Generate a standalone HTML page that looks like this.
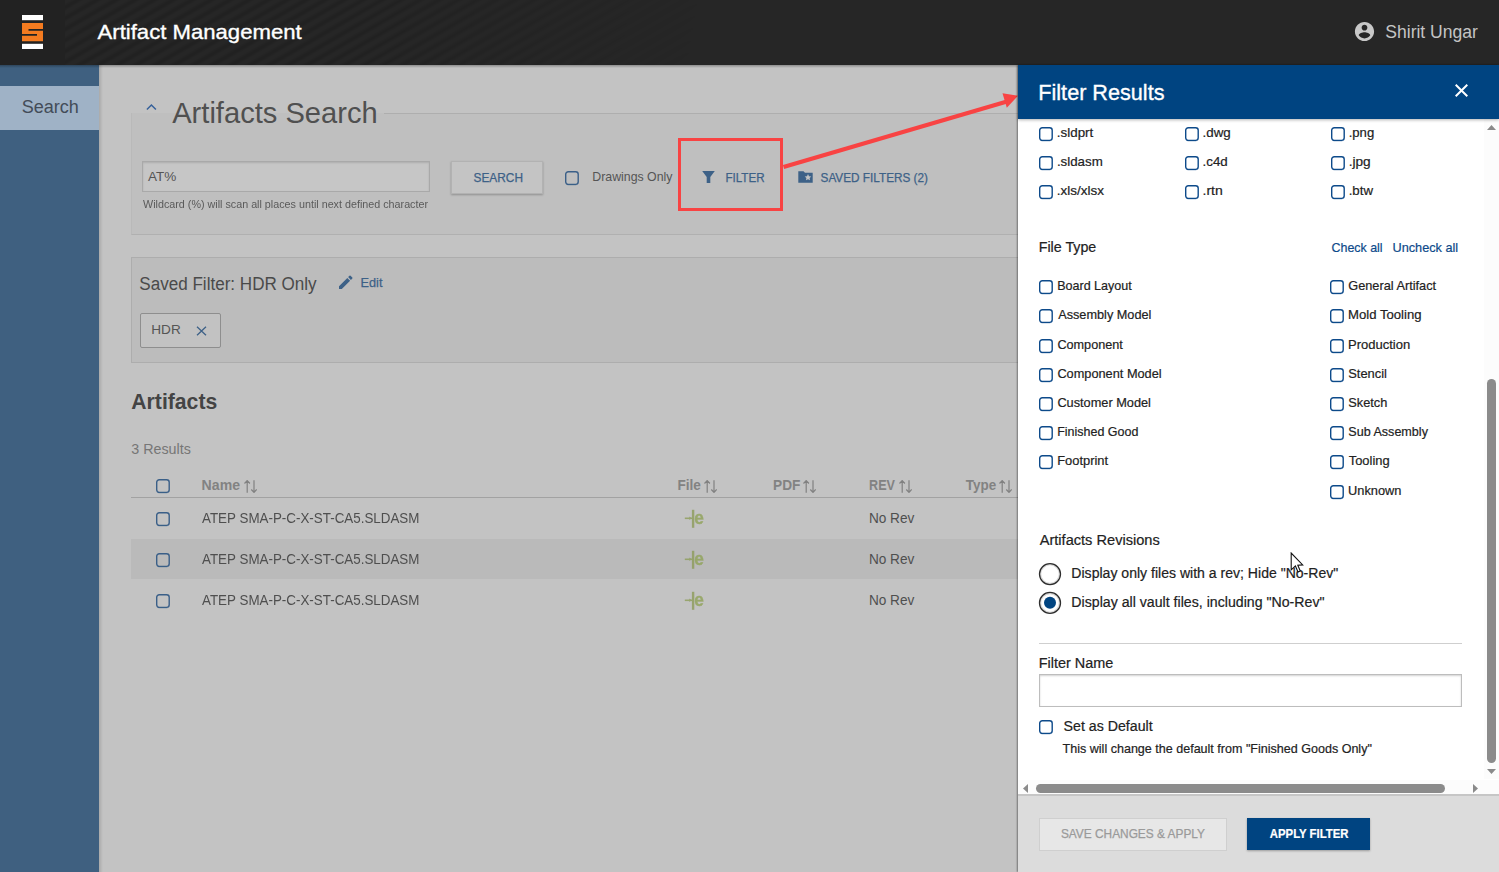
<!DOCTYPE html>
<html><head><meta charset="utf-8"><title>Artifact Management</title>
<style>
*{box-sizing:border-box;margin:0;padding:0}
html,body{width:1499px;height:872px;overflow:hidden;background:#c3c3c3;font-family:"Liberation Sans",Arial,sans-serif;color:#4a4a4a}
.abs,.t{position:absolute;white-space:nowrap}
.t{line-height:1;transform-origin:0 0}
#hdr{position:absolute;left:0;top:0;width:1499px;height:65px;background:#262626}
#hshadow{position:absolute;left:0;top:65px;width:1018px;height:3px;background:linear-gradient(rgba(0,0,0,.28),rgba(0,0,0,0))}
#stripes{position:absolute;left:65px;top:0;width:900px;height:65px;
 background:repeating-linear-gradient(150deg,rgba(0,0,0,0) 0,rgba(0,0,0,0) 3px,rgba(0,0,0,.13) 6px,rgba(0,0,0,.13) 7px,rgba(0,0,0,0) 9.500px);
 -webkit-mask-image:linear-gradient(100deg,#000 0,#000 30%,transparent 70%);mask-image:linear-gradient(100deg,#000 0,#000 30%,transparent 70%)}
#logo{position:absolute;left:0;top:0;width:65px;height:65px;background:#222}
#side{position:absolute;left:0;top:65px;width:99px;height:807px;background:#3f6080}
#side .act{position:absolute;left:0;top:21px;width:99px;height:44px;background:#9fb2c6}
#panel{position:absolute;left:1018px;top:65px;width:481px;height:807px;background:#fff;box-shadow:-1px 0 1.500px rgba(0,0,0,.4)}
#panel .t{-webkit-text-stroke:.2px currentColor}
#phead{z-index:1;position:absolute;left:0;top:0;width:481px;height:54px;background:#004481;box-shadow:0 1px 3px rgba(0,0,0,.3)}
#pfoot{position:absolute;left:0;top:729px;width:481px;height:78px;background:#dcdcdc;border-top:2px solid #c6c6c6}
</style></head><body>

<!-- sidebar -->
<div id="side"><div class="act"></div></div>
<div class="abs" style="left:99px;top:65px;width:4px;height:807px;background:linear-gradient(90deg,rgba(0,0,0,.13),rgba(0,0,0,0))"></div>
<div class="t" id="t0" style="left:21px;top:98px;font-size:18px;color:#434c58;transform:translate(0.75px,0.00px) scaleX(1.0018)">Search</div>

<!-- main (dimmed) content -->
<div id="main">
 <div class="abs" style="left:131px;top:113px;width:900px;height:122px;background:#bfbfbf;border-left:1px solid #b9b9b9;border-bottom:1px solid #b0b0b0"></div>
 <div class="abs" style="left:384px;top:113px;width:640px;height:1px;background:#aeaeae"></div>
 <svg class="abs" style="left:144px;top:102px" width="15" height="10" viewBox="0 0 15 10"><path d="M2.900 7.600 L7.400 3 L11.900 7.600" fill="none" stroke="#36619a" stroke-width="1.500"/></svg>
 <div class="abs" style="left:142px;top:161px;width:288px;height:31px;background:#c6c6c6;border:1px solid #a9a9a9;box-shadow:inset 0 1px 2px rgba(0,0,0,.12)"></div>
 <div class="abs" style="left:451px;top:161px;width:92px;height:33px;background:#c4c4c4;border:1px solid #b2b2b2;box-shadow:0 1px 2px rgba(0,0,0,.25)"></div>
 <svg class="abs" style="left:702px;top:171px" width="13" height="12" viewBox="0 0 13 12"><path d="M0.200 0h12.600L8.300 6v6H4.700V6z" fill="#3d6187"/></svg>
 <svg class="abs" style="left:798px;top:171px" width="15" height="12" viewBox="0 0 15 12"><path d="M0.300 0.300h5.200l1.500 1.500h7.700v9.900H0.300z" fill="#3d6187"/><path d="M10 3.100l1 2.100 2.300.25-1.700 1.550.45 2.300L10 8.150l-2.050 1.150.45-2.300-1.700-1.550 2.300-.25z" fill="#c3c3c3"/></svg>

 <div class="abs" style="left:131px;top:257px;width:900px;height:106px;background:#bcbcbc;border:1px solid #adadad"></div>
 <svg class="abs" style="left:338px;top:274px" width="16" height="16" viewBox="0 0 16 16"><path d="M1 12.200V15h2.800l8.300-8.300-2.800-2.800zM14.300 4.500a.75.75 0 0 0 0-1.060L12.560 1.700a.75.75 0 0 0-1.060 0L10.100 3.100l2.800 2.800z" fill="#3d6187"/></svg>
 <div class="abs" style="left:140px;top:313px;width:81px;height:35px;background:#c2c2c2;border:1px solid #8e8e8e;border-radius:2px"></div>
 <svg class="abs" style="left:196px;top:326px" width="11" height="10" viewBox="0 0 11 10"><path d="M1 0.800l9 8.400M10 0.800l-9 8.400" stroke="#3d6187" stroke-width="1.300"/></svg>

 <div class="abs" style="left:131px;top:496.500px;width:900px;height:1px;background:#a2a2a2"></div>
 <div class="abs" style="left:131px;top:539px;width:900px;height:40px;background:#bababa"></div>
 <svg class="abs" style="left:243.6px;top:480px" width="13" height="13" viewBox="0 0 13 13"><path d="M3.200 12.700V0.900M0.500 3.500L3.200 0.600l2.700 2.900M10 0.300V12.100M7.300 9.500l2.700 2.900 2.700-2.900" fill="none" stroke="#818181" stroke-width="1.200"/></svg><svg class="abs" style="left:704px;top:480px" width="13" height="13" viewBox="0 0 13 13"><path d="M3.200 12.700V0.900M0.500 3.500L3.200 0.600l2.700 2.900M10 0.300V12.100M7.300 9.500l2.700 2.900 2.700-2.900" fill="none" stroke="#818181" stroke-width="1.200"/></svg><svg class="abs" style="left:803.3px;top:480px" width="13" height="13" viewBox="0 0 13 13"><path d="M3.200 12.700V0.900M0.500 3.500L3.200 0.600l2.700 2.900M10 0.300V12.100M7.300 9.500l2.700 2.900 2.700-2.900" fill="none" stroke="#818181" stroke-width="1.200"/></svg><svg class="abs" style="left:898.6px;top:480px" width="13" height="13" viewBox="0 0 13 13"><path d="M3.200 12.700V0.900M0.500 3.500L3.200 0.600l2.700 2.900M10 0.300V12.100M7.300 9.500l2.700 2.900 2.700-2.900" fill="none" stroke="#818181" stroke-width="1.200"/></svg><svg class="abs" style="left:999px;top:480px" width="13" height="13" viewBox="0 0 13 13"><path d="M3.200 12.700V0.900M0.500 3.500L3.200 0.600l2.700 2.900M10 0.300V12.100M7.300 9.500l2.700 2.900 2.700-2.900" fill="none" stroke="#818181" stroke-width="1.200"/></svg>
 <svg class="abs" style="left:684px;top:509px;opacity:.82" width="21" height="20" viewBox="0 0 21 20"><path d="M0.800 9.300h7.200" fill="none" stroke="#8f9f5c" stroke-width="1.600"/><path d="M5.300 7.600l2.400 1.700-2.400 1.700z" fill="#8f9f5c"/><rect x="7.900" y="0.800" width="2.400" height="18" fill="#8e9c5c"/><text x="10.300" y="14.500" font-family="Liberation Sans, sans-serif" font-weight="bold" font-size="18.400" fill="#90a35a" stroke="#90a35a" stroke-width=".35" textLength="9.600" lengthAdjust="spacingAndGlyphs">e</text></svg><svg class="abs" style="left:684px;top:550px;opacity:.82" width="21" height="20" viewBox="0 0 21 20"><path d="M0.800 9.300h7.200" fill="none" stroke="#8f9f5c" stroke-width="1.600"/><path d="M5.300 7.600l2.400 1.700-2.400 1.700z" fill="#8f9f5c"/><rect x="7.900" y="0.800" width="2.400" height="18" fill="#8e9c5c"/><text x="10.300" y="14.500" font-family="Liberation Sans, sans-serif" font-weight="bold" font-size="18.400" fill="#90a35a" stroke="#90a35a" stroke-width=".35" textLength="9.600" lengthAdjust="spacingAndGlyphs">e</text></svg><svg class="abs" style="left:684px;top:591px;opacity:.82" width="21" height="20" viewBox="0 0 21 20"><path d="M0.800 9.300h7.200" fill="none" stroke="#8f9f5c" stroke-width="1.600"/><path d="M5.300 7.600l2.400 1.700-2.400 1.700z" fill="#8f9f5c"/><rect x="7.900" y="0.800" width="2.400" height="18" fill="#8e9c5c"/><text x="10.300" y="14.500" font-family="Liberation Sans, sans-serif" font-weight="bold" font-size="18.400" fill="#90a35a" stroke="#90a35a" stroke-width=".35" textLength="9.600" lengthAdjust="spacingAndGlyphs">e</text></svg>
<svg class="abs" style="left:156px;top:479.0px" width="15" height="15" viewBox="0 0 15 15"><rect x=".7" y=".7" width="12.500" height="12.700" rx="2.600" fill="none" stroke="#3a5f88" stroke-width="1.400"/><path d="M2.500 14.300h8.800" stroke="#3a5f88" stroke-opacity=".3" stroke-width=".7" fill="none"/></svg>
<svg class="abs" style="left:156px;top:512.0px" width="15" height="15" viewBox="0 0 15 15"><rect x=".7" y=".7" width="12.500" height="12.700" rx="2.600" fill="none" stroke="#3a5f88" stroke-width="1.400"/><path d="M2.500 14.300h8.800" stroke="#3a5f88" stroke-opacity=".3" stroke-width=".7" fill="none"/></svg>
<svg class="abs" style="left:156px;top:553.0px" width="15" height="15" viewBox="0 0 15 15"><rect x=".7" y=".7" width="12.500" height="12.700" rx="2.600" fill="none" stroke="#3a5f88" stroke-width="1.400"/><path d="M2.500 14.300h8.800" stroke="#3a5f88" stroke-opacity=".3" stroke-width=".7" fill="none"/></svg>
<svg class="abs" style="left:156px;top:594.0px" width="15" height="15" viewBox="0 0 15 15"><rect x=".7" y=".7" width="12.500" height="12.700" rx="2.600" fill="none" stroke="#3a5f88" stroke-width="1.400"/><path d="M2.500 14.300h8.800" stroke="#3a5f88" stroke-opacity=".3" stroke-width=".7" fill="none"/></svg>
<svg class="abs" style="left:565px;top:171.0px" width="15" height="15" viewBox="0 0 15 15"><rect x=".7" y=".7" width="12.500" height="12.700" rx="2.600" fill="none" stroke="#3a5f88" stroke-width="1.400"/><path d="M2.500 14.300h8.800" stroke="#3a5f88" stroke-opacity=".3" stroke-width=".7" fill="none"/></svg>
<div class="t" id="t1" style="left:172px;top:97px;font-size:29.5px;color:#505050;transform:translate(0.20px,0.50px) scaleX(0.9867)">Artifacts Search</div>
<div class="t" id="t2" style="left:147px;top:170px;font-size:13px;color:#555;transform:translate(0.90px,0.00px) scaleX(1.0410)">AT%</div>
<div class="t" id="t3" style="left:143px;top:199px;font-size:11px;color:#5a5a5a;transform:translate(0.00px,0.00px) scaleX(0.9774)">Wildcard (%) will scan all places until next defined character</div>
<div class="t" id="t4" style="left:473px;top:172px;font-size:12px;color:#3d6187;transform:translate(0.54px,0.00px) scaleX(0.9879);-webkit-text-stroke:.25px #3d6187">SEARCH</div>
<div class="t" id="t5" style="left:592px;top:170px;font-size:13px;color:#555;transform:translate(0.25px,0.00px) scaleX(0.9489)">Drawings Only</div>
<div class="t" id="t6" style="left:725px;top:172px;font-size:12px;color:#3d6187;transform:translate(0.38px,0.00px) scaleX(0.9692);-webkit-text-stroke:.25px #3d6187">FILTER</div>
<div class="t" id="t7" style="left:820px;top:172px;font-size:12px;color:#3d6187;transform:translate(0.55px,0.00px) scaleX(0.9803);-webkit-text-stroke:.25px #3d6187">SAVED FILTERS (2)</div>
<div class="t" id="t8" style="left:139px;top:275px;font-size:18px;color:#4a4a4a;transform:translate(0.30px,0.00px) scaleX(0.9481)">Saved Filter: HDR Only</div>
<div class="t" id="t9" style="left:360px;top:276px;font-size:13px;color:#3d6187;transform:translate(0.52px,0.00px) scaleX(0.9783);-webkit-text-stroke:.25px #3d6187">Edit</div>
<div class="t" id="t10" style="left:151px;top:323px;font-size:13px;color:#555;transform:translate(0.30px,0.00px) scaleX(1.0450)">HDR</div>
<div class="t" id="t11" style="left:131px;top:391px;font-size:22px;color:#444;transform:translate(0.34px,0.00px) scaleX(0.9620);font-weight:bold">Artifacts</div>
<div class="t" id="t12" style="left:131px;top:442px;font-size:14px;color:#767676;transform:translate(0.29px,0.00px) scaleX(1.0208)">3 Results</div>
<div class="t" id="t13" style="left:201px;top:478px;font-size:14px;color:#828282;transform:translate(0.61px,0.00px) scaleX(1.0067);font-weight:bold">Name</div>
<div class="t" id="t14" style="left:677px;top:478px;font-size:14px;color:#828282;transform:translate(0.40px,0.00px) scaleX(0.9697);font-weight:bold">File</div>
<div class="t" id="t15" style="left:773px;top:478px;font-size:14px;color:#828282;transform:translate(0.10px,0.00px) scaleX(0.9780);font-weight:bold">PDF</div>
<div class="t" id="t16" style="left:869px;top:478px;font-size:14px;color:#828282;transform:translate(0.06px,0.00px) scaleX(0.9002);font-weight:bold">REV</div>
<div class="t" id="t17" style="left:965px;top:478px;font-size:14px;color:#828282;transform:translate(0.85px,0.00px) scaleX(0.9597);font-weight:bold">Type</div>
<div class="t" id="t18" style="left:202px;top:511px;font-size:14px;color:#4f4f4f;transform:translate(0.00px,0.00px) scaleX(0.9562)">ATEP SMA-P-C-X-ST-CA5.SLDASM</div>
<div class="t" id="t19" style="left:868px;top:511px;font-size:14px;color:#4f4f4f;transform:translate(0.88px,0.00px) scaleX(0.9730)">No Rev</div>
<div class="t" id="t20" style="left:202px;top:552px;font-size:14px;color:#4f4f4f;transform:translate(0.00px,0.00px) scaleX(0.9562)">ATEP SMA-P-C-X-ST-CA5.SLDASM</div>
<div class="t" id="t21" style="left:868px;top:552px;font-size:14px;color:#4f4f4f;transform:translate(0.88px,0.00px) scaleX(0.9730)">No Rev</div>
<div class="t" id="t22" style="left:202px;top:593px;font-size:14px;color:#4f4f4f;transform:translate(0.00px,0.00px) scaleX(0.9562)">ATEP SMA-P-C-X-ST-CA5.SLDASM</div>
<div class="t" id="t23" style="left:868px;top:593px;font-size:14px;color:#4f4f4f;transform:translate(0.88px,0.00px) scaleX(0.9730)">No Rev</div>
</div>

<!-- header -->
<div id="hshadow"></div>
<div id="hdr">
 <div id="stripes"></div>
 <div id="logo">
  <svg class="abs" style="left:22px;top:15px" width="21" height="34" viewBox="0 0 21 34"><rect x="0" y="0" width="21" height="5.200" fill="#fff"/><rect x="0" y="28.800" width="21" height="5.200" fill="#fff"/><path d="M0 8h21v6H6.500v1.800H21V26.300H0v-5.500h15v-1.800H0z" fill="#f47b20"/></svg>
 </div>
 <svg class="abs" style="left:1352.600px;top:20.400px" width="23" height="23" viewBox="0 0 24 24"><path d="M12 2C6.480 2 2 6.480 2 12s4.480 10 10 10 10-4.480 10-10S17.520 2 12 2zm0 3c1.660 0 3 1.340 3 3s-1.340 3-3 3-3-1.340-3-3 1.340-3 3-3zm0 14.200c-2.500 0-4.710-1.280-6-3.220.030-1.990 4-3.080 6-3.080 1.990 0 5.970 1.090 6 3.080-1.290 1.940-3.500 3.220-6 3.220z" fill="#c8c8c8"/></svg>
<div class="t" id="t24" style="left:97px;top:21px;font-size:21px;color:#fff;transform:translate(0.50px,0.00px) scaleX(1.0536);-webkit-text-stroke:.35px #fff">Artifact Management</div>
<div class="t" id="t25" style="left:1385px;top:23px;font-size:18px;color:#c4c4c4;transform:translate(0.28px,0.00px) scaleX(0.9745)">Shirit Ungar</div>
</div>

<!-- red annotation -->
<div class="abs" style="left:678px;top:138px;width:105px;height:73px;border:3px solid #f84343"></div>
<svg class="abs" style="left:770px;top:81.300px" width="260" height="100" viewBox="0 0 260 100"><path d="M13.500 86 L237 20.500" stroke="#f84343" stroke-width="4.300" fill="none"/><path d="M248 14.700 L232.500 12.300 L236.800 26.800 z" fill="#f84343"/></svg>

<!-- panel -->
<div id="panel">
 <div id="pfoot"></div>
 <div class="abs" style="left:466px;top:54px;width:15px;height:660px;background:#fcfcfc"></div>
 <div class="abs" style="left:469px;top:314.3px;width:9px;height:383.7px;background:#8b8b8b;border-radius:4.500px"></div>
 <svg class="abs" style="left:469px;top:60px" width="9" height="5" viewBox="0 0 9 5"><path d="M0 5L4.500 0 9 5z" fill="#8a8a8a"/></svg>
 <svg class="abs" style="left:469px;top:704px" width="9" height="5" viewBox="0 0 9 5"><path d="M0 0L4.500 5 9 0z" fill="#8a8a8a"/></svg>
 <div class="abs" style="left:0;top:715px;width:481px;height:14px;background:#fcfcfc"></div>
 <div class="abs" style="left:17.7px;top:719px;width:409.3px;height:9px;background:#8b8b8b;border-radius:4.500px"></div>
 <svg class="abs" style="left:5px;top:719px" width="5" height="9" viewBox="0 0 5 9"><path d="M5 0L0 4.500 5 9z" fill="#8a8a8a"/></svg>
 <svg class="abs" style="left:455px;top:719px" width="5" height="9" viewBox="0 0 5 9"><path d="M0 0L5 4.500 0 9z" fill="#8a8a8a"/></svg>
 <svg class="abs" style="left:20px;top:497px" width="24" height="24" viewBox="0 0 24 24"><circle cx="12" cy="12.100" r="10.500" fill="#fff" stroke="#2e2e2e" stroke-width="1.300"/><circle cx="12" cy="12.100" r="9.300" fill="none" stroke="#000" stroke-opacity=".16" stroke-width="1.100"/></svg>
 <svg class="abs" style="left:20px;top:526px" width="24" height="24" viewBox="0 0 24 24"><circle cx="12" cy="11.900" r="10.500" fill="#fff" stroke="#2e2e2e" stroke-width="1.300"/><circle cx="12" cy="11.900" r="9.300" fill="none" stroke="#000" stroke-opacity=".16" stroke-width="1.100"/><circle cx="12" cy="11.800" r="6" fill="#004481"/></svg>
 <div class="abs" style="left:21px;top:578px;width:423px;height:1px;background:#cfcfcf"></div>
 <div class="abs" style="left:21px;top:609px;width:423px;height:32.500px;background:#fff;border:1px solid #bdbdbd;box-shadow:inset 0 1px 2px rgba(0,0,0,.18)"></div>
 <div class="abs" style="left:21px;top:752.5px;width:188px;height:33px;background:#e7e7e7;border:1px solid #cfcfcf"></div>
 <div class="abs" style="left:229px;top:753px;width:123px;height:32px;background:#004481;box-shadow:0 1px 2px rgba(0,0,0,.3)"></div>
<svg class="abs" style="left:21px;top:62.0px" width="15" height="15" viewBox="0 0 15 15"><rect x=".7" y=".7" width="12.500" height="12.700" rx="2.600" fill="#fff" stroke="#0d4a8a" stroke-width="1.400"/><path d="M2.500 14.300h8.800" stroke="#0d4a8a" stroke-opacity=".3" stroke-width=".7" fill="none"/></svg>
<svg class="abs" style="left:21px;top:91.0px" width="15" height="15" viewBox="0 0 15 15"><rect x=".7" y=".7" width="12.500" height="12.700" rx="2.600" fill="#fff" stroke="#0d4a8a" stroke-width="1.400"/><path d="M2.500 14.300h8.800" stroke="#0d4a8a" stroke-opacity=".3" stroke-width=".7" fill="none"/></svg>
<svg class="abs" style="left:21px;top:120.3px" width="15" height="15" viewBox="0 0 15 15"><rect x=".7" y=".7" width="12.500" height="12.700" rx="2.600" fill="#fff" stroke="#0d4a8a" stroke-width="1.400"/><path d="M2.500 14.300h8.800" stroke="#0d4a8a" stroke-opacity=".3" stroke-width=".7" fill="none"/></svg>
<svg class="abs" style="left:167px;top:62.0px" width="15" height="15" viewBox="0 0 15 15"><rect x=".7" y=".7" width="12.500" height="12.700" rx="2.600" fill="#fff" stroke="#0d4a8a" stroke-width="1.400"/><path d="M2.500 14.300h8.800" stroke="#0d4a8a" stroke-opacity=".3" stroke-width=".7" fill="none"/></svg>
<svg class="abs" style="left:167px;top:91.0px" width="15" height="15" viewBox="0 0 15 15"><rect x=".7" y=".7" width="12.500" height="12.700" rx="2.600" fill="#fff" stroke="#0d4a8a" stroke-width="1.400"/><path d="M2.500 14.300h8.800" stroke="#0d4a8a" stroke-opacity=".3" stroke-width=".7" fill="none"/></svg>
<svg class="abs" style="left:167px;top:120.3px" width="15" height="15" viewBox="0 0 15 15"><rect x=".7" y=".7" width="12.500" height="12.700" rx="2.600" fill="#fff" stroke="#0d4a8a" stroke-width="1.400"/><path d="M2.500 14.300h8.800" stroke="#0d4a8a" stroke-opacity=".3" stroke-width=".7" fill="none"/></svg>
<svg class="abs" style="left:313px;top:62.0px" width="15" height="15" viewBox="0 0 15 15"><rect x=".7" y=".7" width="12.500" height="12.700" rx="2.600" fill="#fff" stroke="#0d4a8a" stroke-width="1.400"/><path d="M2.500 14.300h8.800" stroke="#0d4a8a" stroke-opacity=".3" stroke-width=".7" fill="none"/></svg>
<svg class="abs" style="left:313px;top:91.0px" width="15" height="15" viewBox="0 0 15 15"><rect x=".7" y=".7" width="12.500" height="12.700" rx="2.600" fill="#fff" stroke="#0d4a8a" stroke-width="1.400"/><path d="M2.500 14.300h8.800" stroke="#0d4a8a" stroke-opacity=".3" stroke-width=".7" fill="none"/></svg>
<svg class="abs" style="left:313px;top:120.3px" width="15" height="15" viewBox="0 0 15 15"><rect x=".7" y=".7" width="12.500" height="12.700" rx="2.600" fill="#fff" stroke="#0d4a8a" stroke-width="1.400"/><path d="M2.500 14.300h8.800" stroke="#0d4a8a" stroke-opacity=".3" stroke-width=".7" fill="none"/></svg>
<svg class="abs" style="left:21px;top:215.0px" width="15" height="15" viewBox="0 0 15 15"><rect x=".7" y=".7" width="12.500" height="12.700" rx="2.600" fill="#fff" stroke="#0d4a8a" stroke-width="1.400"/><path d="M2.500 14.300h8.800" stroke="#0d4a8a" stroke-opacity=".3" stroke-width=".7" fill="none"/></svg>
<svg class="abs" style="left:21px;top:244.3px" width="15" height="15" viewBox="0 0 15 15"><rect x=".7" y=".7" width="12.500" height="12.700" rx="2.600" fill="#fff" stroke="#0d4a8a" stroke-width="1.400"/><path d="M2.500 14.300h8.800" stroke="#0d4a8a" stroke-opacity=".3" stroke-width=".7" fill="none"/></svg>
<svg class="abs" style="left:21px;top:274.3px" width="15" height="15" viewBox="0 0 15 15"><rect x=".7" y=".7" width="12.500" height="12.700" rx="2.600" fill="#fff" stroke="#0d4a8a" stroke-width="1.400"/><path d="M2.500 14.300h8.800" stroke="#0d4a8a" stroke-opacity=".3" stroke-width=".7" fill="none"/></svg>
<svg class="abs" style="left:21px;top:303.2px" width="15" height="15" viewBox="0 0 15 15"><rect x=".7" y=".7" width="12.500" height="12.700" rx="2.600" fill="#fff" stroke="#0d4a8a" stroke-width="1.400"/><path d="M2.500 14.300h8.800" stroke="#0d4a8a" stroke-opacity=".3" stroke-width=".7" fill="none"/></svg>
<svg class="abs" style="left:21px;top:332.3px" width="15" height="15" viewBox="0 0 15 15"><rect x=".7" y=".7" width="12.500" height="12.700" rx="2.600" fill="#fff" stroke="#0d4a8a" stroke-width="1.400"/><path d="M2.500 14.300h8.800" stroke="#0d4a8a" stroke-opacity=".3" stroke-width=".7" fill="none"/></svg>
<svg class="abs" style="left:21px;top:361.0px" width="15" height="15" viewBox="0 0 15 15"><rect x=".7" y=".7" width="12.500" height="12.700" rx="2.600" fill="#fff" stroke="#0d4a8a" stroke-width="1.400"/><path d="M2.500 14.300h8.800" stroke="#0d4a8a" stroke-opacity=".3" stroke-width=".7" fill="none"/></svg>
<svg class="abs" style="left:21px;top:390.3px" width="15" height="15" viewBox="0 0 15 15"><rect x=".7" y=".7" width="12.500" height="12.700" rx="2.600" fill="#fff" stroke="#0d4a8a" stroke-width="1.400"/><path d="M2.500 14.300h8.800" stroke="#0d4a8a" stroke-opacity=".3" stroke-width=".7" fill="none"/></svg>
<svg class="abs" style="left:312px;top:215.0px" width="15" height="15" viewBox="0 0 15 15"><rect x=".7" y=".7" width="12.500" height="12.700" rx="2.600" fill="#fff" stroke="#0d4a8a" stroke-width="1.400"/><path d="M2.500 14.300h8.800" stroke="#0d4a8a" stroke-opacity=".3" stroke-width=".7" fill="none"/></svg>
<svg class="abs" style="left:312px;top:244.3px" width="15" height="15" viewBox="0 0 15 15"><rect x=".7" y=".7" width="12.500" height="12.700" rx="2.600" fill="#fff" stroke="#0d4a8a" stroke-width="1.400"/><path d="M2.500 14.300h8.800" stroke="#0d4a8a" stroke-opacity=".3" stroke-width=".7" fill="none"/></svg>
<svg class="abs" style="left:312px;top:274.3px" width="15" height="15" viewBox="0 0 15 15"><rect x=".7" y=".7" width="12.500" height="12.700" rx="2.600" fill="#fff" stroke="#0d4a8a" stroke-width="1.400"/><path d="M2.500 14.300h8.800" stroke="#0d4a8a" stroke-opacity=".3" stroke-width=".7" fill="none"/></svg>
<svg class="abs" style="left:312px;top:303.2px" width="15" height="15" viewBox="0 0 15 15"><rect x=".7" y=".7" width="12.500" height="12.700" rx="2.600" fill="#fff" stroke="#0d4a8a" stroke-width="1.400"/><path d="M2.500 14.300h8.800" stroke="#0d4a8a" stroke-opacity=".3" stroke-width=".7" fill="none"/></svg>
<svg class="abs" style="left:312px;top:332.3px" width="15" height="15" viewBox="0 0 15 15"><rect x=".7" y=".7" width="12.500" height="12.700" rx="2.600" fill="#fff" stroke="#0d4a8a" stroke-width="1.400"/><path d="M2.500 14.300h8.800" stroke="#0d4a8a" stroke-opacity=".3" stroke-width=".7" fill="none"/></svg>
<svg class="abs" style="left:312px;top:361.0px" width="15" height="15" viewBox="0 0 15 15"><rect x=".7" y=".7" width="12.500" height="12.700" rx="2.600" fill="#fff" stroke="#0d4a8a" stroke-width="1.400"/><path d="M2.500 14.300h8.800" stroke="#0d4a8a" stroke-opacity=".3" stroke-width=".7" fill="none"/></svg>
<svg class="abs" style="left:312px;top:390.3px" width="15" height="15" viewBox="0 0 15 15"><rect x=".7" y=".7" width="12.500" height="12.700" rx="2.600" fill="#fff" stroke="#0d4a8a" stroke-width="1.400"/><path d="M2.500 14.300h8.800" stroke="#0d4a8a" stroke-opacity=".3" stroke-width=".7" fill="none"/></svg>
<svg class="abs" style="left:312px;top:420.0px" width="15" height="15" viewBox="0 0 15 15"><rect x=".7" y=".7" width="12.500" height="12.700" rx="2.600" fill="#fff" stroke="#0d4a8a" stroke-width="1.400"/><path d="M2.500 14.300h8.800" stroke="#0d4a8a" stroke-opacity=".3" stroke-width=".7" fill="none"/></svg>
<svg class="abs" style="left:21px;top:655.0px" width="15" height="15" viewBox="0 0 15 15"><rect x=".7" y=".7" width="12.500" height="12.700" rx="2.600" fill="#fff" stroke="#0d4a8a" stroke-width="1.400"/><path d="M2.500 14.300h8.800" stroke="#0d4a8a" stroke-opacity=".3" stroke-width=".7" fill="none"/></svg>
<div class="t" id="t26" style="left:20px;top:16px;font-size:22px;color:#fff;transform:translate(0.31px,0.70px) scaleX(0.9828);-webkit-text-stroke:.35px #fff;z-index:2">Filter Results</div>
<div class="t" id="t27" style="left:38px;top:61px;font-size:13px;color:#222;transform:translate(0.87px,0.00px) scaleX(1.0278)">.sldprt</div>
<div class="t" id="t28" style="left:38px;top:90px;font-size:13px;color:#222;transform:translate(0.88px,0.00px) scaleX(1.0233)">.sldasm</div>
<div class="t" id="t29" style="left:38px;top:119px;font-size:13px;color:#222;transform:translate(0.86px,0.30px) scaleX(1.0364)">.xls/xlsx</div>
<div class="t" id="t30" style="left:184px;top:61px;font-size:13px;color:#222;transform:translate(0.57px,0.00px) scaleX(1.0275)">.dwg</div>
<div class="t" id="t31" style="left:184px;top:90px;font-size:13px;color:#222;transform:translate(0.57px,0.00px) scaleX(1.0245)">.c4d</div>
<div class="t" id="t32" style="left:184px;top:119px;font-size:13px;color:#222;transform:translate(0.52px,0.30px) scaleX(1.0768)">.rtn</div>
<div class="t" id="t33" style="left:330px;top:61px;font-size:13px;color:#222;transform:translate(0.68px,0.00px) scaleX(1.0093)">.png</div>
<div class="t" id="t34" style="left:330px;top:90px;font-size:13px;color:#222;transform:translate(0.64px,0.00px) scaleX(1.0501)">.jpg</div>
<div class="t" id="t35" style="left:330px;top:119px;font-size:13px;color:#222;transform:translate(0.68px,0.30px) scaleX(1.0198)">.btw</div>
<div class="t" id="t36" style="left:20px;top:175px;font-size:14px;color:#222;transform:translate(0.68px,0.00px) scaleX(1.0191)">File Type</div>
<div class="t" id="t37" style="left:313px;top:176px;font-size:13px;color:#0d4a8a;transform:translate(0.49px,0.00px) scaleX(0.9559)">Check all</div>
<div class="t" id="t38" style="left:374px;top:176px;font-size:13px;color:#0d4a8a;transform:translate(0.52px,0.00px) scaleX(0.9758)">Uncheck all</div>
<div class="t" id="t39" style="left:39px;top:214px;font-size:13px;color:#222;transform:translate(0.18px,0.00px) scaleX(0.9644)">Board Layout</div>
<div class="t" id="t40" style="left:40px;top:243px;font-size:13px;color:#222;transform:translate(0.15px,0.30px) scaleX(0.9779)">Assembly Model</div>
<div class="t" id="t41" style="left:39px;top:273px;font-size:13px;color:#222;transform:translate(0.39px,0.30px) scaleX(0.9732)">Component</div>
<div class="t" id="t42" style="left:39px;top:302px;font-size:13px;color:#222;transform:translate(0.39px,0.20px) scaleX(0.9813)">Component Model</div>
<div class="t" id="t43" style="left:39px;top:331px;font-size:13px;color:#222;transform:translate(0.39px,0.30px) scaleX(0.9807)">Customer Model</div>
<div class="t" id="t44" style="left:39px;top:360px;font-size:13px;color:#222;transform:translate(0.19px,0.00px) scaleX(0.9603)">Finished Good</div>
<div class="t" id="t45" style="left:39px;top:389px;font-size:13px;color:#222;transform:translate(0.15px,0.30px) scaleX(0.9934)">Footprint</div>
<div class="t" id="t46" style="left:330px;top:214px;font-size:13px;color:#222;transform:translate(0.24px,0.00px) scaleX(0.9802)">General Artifact</div>
<div class="t" id="t47" style="left:329px;top:243px;font-size:13px;color:#222;transform:translate(0.99px,0.30px) scaleX(1.0106)">Mold Tooling</div>
<div class="t" id="t48" style="left:329px;top:273px;font-size:13px;color:#222;transform:translate(1.00px,0.30px) scaleX(1.0009)">Production</div>
<div class="t" id="t49" style="left:330px;top:302px;font-size:13px;color:#222;transform:translate(0.22px,0.20px) scaleX(0.9912)">Stencil</div>
<div class="t" id="t50" style="left:330px;top:331px;font-size:13px;color:#222;transform:translate(0.23px,0.30px) scaleX(0.9825)">Sketch</div>
<div class="t" id="t51" style="left:330px;top:360px;font-size:13px;color:#222;transform:translate(0.25px,0.00px) scaleX(0.9671)">Sub Assembly</div>
<div class="t" id="t52" style="left:330px;top:389px;font-size:13px;color:#222;transform:translate(0.74px,0.30px) scaleX(0.9919)">Tooling</div>
<div class="t" id="t53" style="left:330px;top:419px;font-size:13px;color:#222;transform:translate(0.01px,0.00px) scaleX(0.9850)">Unknown</div>
<div class="t" id="t54" style="left:21px;top:468px;font-size:14px;color:#222;transform:translate(0.70px,0.00px) scaleX(1.0426)">Artifacts Revisions</div>
<div class="t" id="t55" style="left:53px;top:501px;font-size:14px;color:#222;transform:translate(0.35px,0.00px) scaleX(1.0038)">Display only files with a rev; Hide "No-Rev"</div>
<div class="t" id="t56" style="left:53px;top:530px;font-size:14px;color:#222;transform:translate(0.34px,0.00px) scaleX(1.0112)">Display all vault files, including "No-Rev"</div>
<div class="t" id="t57" style="left:20px;top:591px;font-size:14px;color:#222;transform:translate(0.72px,0.00px) scaleX(1.0303)">Filter Name</div>
<div class="t" id="t58" style="left:45px;top:654px;font-size:14px;color:#222;transform:translate(0.59px,0.00px) scaleX(1.0127)">Set as Default</div>
<div class="t" id="t59" style="left:44px;top:677px;font-size:13px;color:#222;transform:translate(0.60px,0.00px) scaleX(0.9645)">This will change the default from "Finished Goods Only"</div>
<div class="t" id="t60" style="left:42px;top:763px;font-size:12px;color:#9a9a9a;transform:translate(0.90px,0.00px) scaleX(0.9893);-webkit-text-stroke:.25px #9a9a9a">SAVE CHANGES &amp; APPLY</div>
<div class="t" id="t61" style="left:251px;top:763px;font-size:12px;color:#fff;transform:translate(0.75px,0.00px) scaleX(0.9476);font-weight:bold">APPLY FILTER</div>
 <svg class="abs" style="left:272px;top:487px" width="14" height="22" viewBox="0 0 14 22"><path d="M1.200 1V17.800L5.400 14l2.600 6 2.300-1-2.500-5.800 4.900-.3z" fill="#fff" stroke="#111" stroke-width="1.100" stroke-linejoin="miter"/></svg>
 <div id="phead"></div>
 <svg class="abs" style="left:437px;top:19.200000000000003px;z-index:2" width="13" height="13" viewBox="0 0 13 13"><path d="M0.700 0.700l11.600 11.600M12.300 0.700L0.700 12.300" stroke="#fff" stroke-width="2"/></svg>
</div>
</body></html>
